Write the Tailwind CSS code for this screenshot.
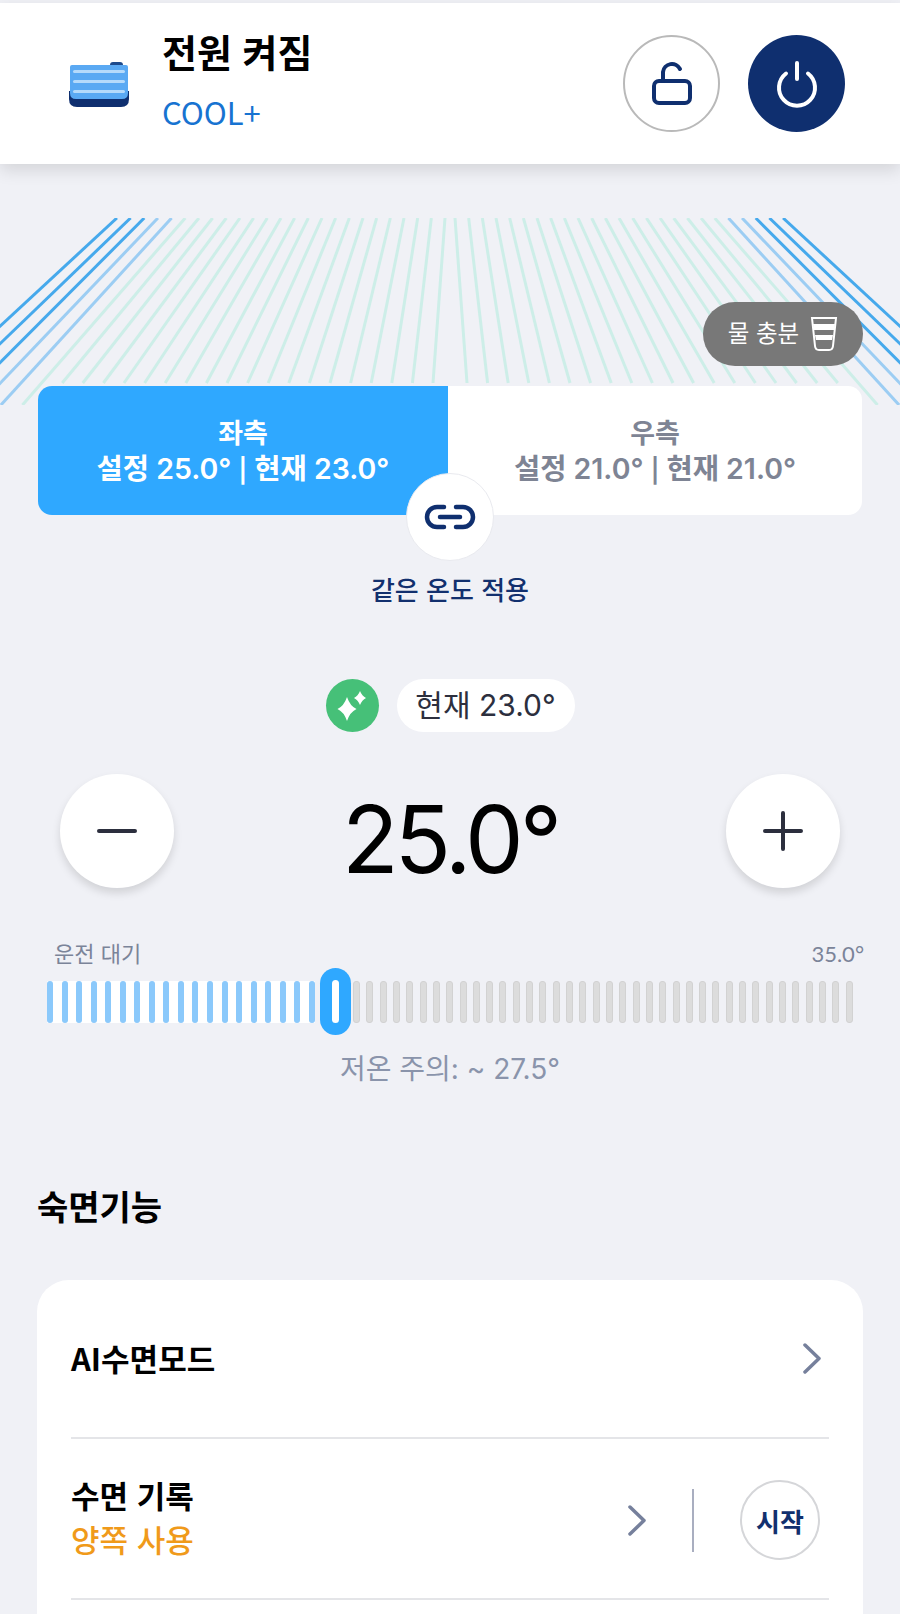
<!DOCTYPE html>
<html lang="ko">
<head>
  <meta charset="UTF-8">
  <meta name="viewport" content="width=device-width, initial-scale=1.0">
  <script src="https://cdn.jsdelivr.net/npm/@tailwindcss/browser@4"></script>
  <title>전원 켜짐</title>
</head>

<body class="bg-[#f0f1f6] font-['Inter','Noto_Sans_CJK_KR',sans-serif]">
  <div class="relative w-[900px] h-[1614px] overflow-hidden pt-[3px]">

    <!-- header -->
    <header class="relative z-10 h-[161px] bg-white flex items-center pl-[69px] pr-[55px] shadow-[0_6px_16px_rgba(0,0,0,0.12)]">
      <svg class="w-[60px] h-[46px] mt-[1px]" viewBox="0 0 60 46">
        <path d="M41 4 q0-3 3-3 h7 q3 0 3 3z" fill="#1d4a8c"/>
        <path d="M0 30 h60 v8 q0 8-8 8 H8 q-8 0-8-8z" fill="#0f2f6f"/>
        <path d="M1 6 q0-2 2-2 h54 q2 0 2 2 v26 q0 6-6 6 H7 q-6 0-6-6z" fill="#5aa9f3"/>
        <rect x="4" y="9" width="52" height="3" rx="1.5" fill="#b5dafb"/>
        <rect x="4" y="19" width="52" height="3" rx="1.5" fill="#b5dafb"/>
        <rect x="4" y="29" width="52" height="3" rx="1.5" fill="#b5dafb"/>
      </svg>
      <div class="ml-[33px] flex-1">
        <div class="text-[38px] leading-[44px] font-bold text-black font-['Noto_Sans_CJK_KR',sans-serif] mb-[21px] -mt-[8px]">전원 켜짐</div>
        <div class="text-[31px] leading-[36px] text-[#1773d1] font-['Noto_Sans_CJK_KR',sans-serif]">COOL+</div>
      </div>
      <div class="flex gap-[28px]">
        <div class="w-[97px] h-[97px] rounded-full border-2 border-[#b9b9b9] flex items-center justify-center">
          <svg class="w-[44px] h-[46px]" viewBox="0 0 44 46" fill="none" stroke="#0f2f6f" stroke-width="4" stroke-linecap="round">
            <rect x="4" y="20" width="36" height="22" rx="5"/>
            <path d="M13 20 v-9 a9 9 0 0 1 17-3"/>
          </svg>
        </div>
        <div class="w-[97px] h-[97px] rounded-full bg-[#0f2f6f] flex items-center justify-center">
          <svg class="w-[44px] h-[48px]" viewBox="0 0 44 48" fill="none" stroke="#fff" stroke-width="4" stroke-linecap="round">
            <path d="M22 3 v16"/>
            <path d="M11 13.5 a18 18 0 1 0 22 0"/>
          </svg>
        </div>
      </div>
    </header>

    <!-- rays behind the selector, generated below -->
    <svg id="rays" class="absolute left-0 top-[218px] w-[900px] h-[187px]" viewBox="0 218 900 187" fill="none" stroke-width="3"></svg>

    <div class="relative">
      <!-- water badge -->
      <div class="absolute right-[37px] top-[138px] w-[160px] h-[64px] rounded-full bg-[#787878] flex items-center justify-center gap-[11px] text-white text-[23.5px] z-10">
        <span>물 충분</span>
        <svg class="w-[28px] h-[34px]" viewBox="0 0 28 34" fill="none" stroke="#fff" stroke-width="2">
          <path d="M2 1 L5 29 q0.4 4 4 4 h10 q3.6 0 4-4 L26 1z"/>
          <path d="M3 7 h22 l-1 6 H4z M5 18 h18 l-1 5 H6z" fill="#fff" stroke="none"/>
        </svg>
      </div>

      <!-- left / right selector -->
      <div class="pt-[222px] px-[38px]">
        <div class="flex h-[129px] rounded-[14px] overflow-hidden">
          <div class="w-[410px] bg-[#2fa8ff] text-white flex flex-col items-center pt-[30px] font-semibold text-[28.5px] leading-[35px]">
            <span class="text-[27px]">좌측</span>
            <span>설정 25.0° <span class="text-[24px]">|</span> 현재 23.0°</span>
          </div>
          <div class="flex-1 bg-white text-[#7e8494] flex flex-col items-center pt-[30px] font-semibold text-[28.5px] leading-[35px]">
            <span class="text-[27px]">우측</span>
            <span>설정 21.0° <span class="text-[24px]">|</span> 현재 21.0°</span>
          </div>
        </div>
      </div>

      <div class="flex flex-col items-center -mt-[42px] relative">
        <div class="w-[88px] h-[88px] rounded-full bg-white border border-[#e9eaef] flex items-center justify-center">
          <svg class="w-[52px] h-[26px]" viewBox="0 0 52 26" fill="none" stroke="#0f2f6f" stroke-width="4.5" stroke-linecap="round">
            <path d="M20 3 H13 a10 10 0 0 0 0 20 H20"/>
            <path d="M32 3 H39 a10 10 0 0 1 0 20 H32"/>
            <path d="M16 13 H36"/>
          </svg>
        </div>
        <div class="mt-[10px] text-[26px] leading-[36px] font-medium text-[#12306e] font-['Noto_Sans_CJK_KR',sans-serif]">같은 온도 적용</div>
      </div>

      <!-- current temp -->
      <div class="mt-[72px] flex justify-center items-center gap-[18px]">
        <div class="w-[53px] h-[53px] rounded-full bg-[#46c078] flex items-center justify-center">
          <svg class="w-[34px] h-[36px]" viewBox="0 0 34 36" fill="#fff">
            <path d="M12 9 Q15 18 21.5 21 Q15 24 12 33 Q9 24 2.5 21 Q9 18 12 9z"/>
            <path d="M25 3 Q27 8 31 10 Q27 12 25 17 Q23 12 19 10 Q23 8 25 3z"/>
          </svg>
        </div>
        <div class="w-[178px] h-[53px] rounded-full bg-white flex items-center justify-center text-[30px] text-[#2c2f3e]">현재 23.0°</div>
      </div>

      <!-- set temp -->
      <div class="mt-[42px] px-[60px] flex items-center justify-between">
        <div class="w-[114px] h-[114px] rounded-full bg-white shadow-[0_5px_9px_rgba(0,0,0,0.13)] flex items-center justify-center">
          <svg class="w-[40px] h-[40px]" viewBox="0 0 40 40" stroke="#2c2f3e" stroke-width="4" stroke-linecap="round"><path d="M2 20 H38"/></svg>
        </div>
        <div class="mt-[8px] -mb-[8px] text-[93px] leading-[114px] tracking-[-4px] text-black">25.0°</div>
        <div class="w-[114px] h-[114px] rounded-full bg-white shadow-[0_5px_9px_rgba(0,0,0,0.13)] flex items-center justify-center">
          <svg class="w-[40px] h-[40px]" viewBox="0 0 40 40" stroke="#2c2f3e" stroke-width="4" stroke-linecap="round"><path d="M2 20 H38 M20 2 V38"/></svg>
        </div>
      </div>

      <!-- slider -->
      <div class="mt-[51px] pl-[54px] pr-[36px] flex justify-between text-[22px] leading-[30px] text-[#7b8499]">
        <span>운전 대기</span>
        <span class="font-['Lato',sans-serif]">35.0°</span>
      </div>
      <div class="-mt-[1px] pl-[47px] flex items-center h-[67px]">
        <div id="ticksOn" class="w-[268px] h-[42px] bg-white flex justify-between"></div>
        <div class="ml-[5px] w-[31px] h-[67px] rounded-full bg-[#2fa8ff] flex items-center justify-center">
          <div class="w-[7px] h-[43px] rounded-full bg-white"></div>
        </div>
        <div id="ticksOff" class="ml-[2px] w-[500px] h-[42px] flex justify-between"></div>
      </div>
      <div class="mt-[16px] text-center text-[28px] leading-[36px] text-[#8a94ab]">저온 주의: ~ 27.5°</div>

      <!-- sleep -->
      <h2 class="mt-[99px] ml-[37px] text-[34px] leading-[40px] font-bold text-black font-['Noto_Sans_CJK_KR',sans-serif]">숙면기능</h2>
      <div class="mt-[54px] mx-[37px] bg-white rounded-[32px] px-[34px] font-['Noto_Sans_CJK_KR',sans-serif] h-[400px]">
        <div class="h-[159px] flex items-center justify-between border-b-2 border-[#e4e5e8]">
          <span class="text-[31px] font-bold text-black">AI수면모드</span>
          <svg class="w-[18px] h-[31px] mr-[8px]" viewBox="0 0 18 31" fill="none" stroke="#76809c" stroke-width="3.5" stroke-linecap="round" stroke-linejoin="round"><path d="M2 2 L16 15.5 L2 29"/></svg>
        </div>
        <div class="h-[161px] pt-[3px] flex items-center border-b-2 border-[#e4e5e8]">
          <div class="flex-1 -mt-[7px] leading-[44px] text-[31px]">
            <div class="font-bold text-black">수면 기록</div>
            <div class="text-[#f09a1a] font-medium">양쪽 사용</div>
          </div>
          <svg class="w-[18px] h-[31px]" viewBox="0 0 18 31" fill="none" stroke="#76809c" stroke-width="3.5" stroke-linecap="round" stroke-linejoin="round"><path d="M2 2 L16 15.5 L2 29"/></svg>
          <div class="ml-[46px] w-[2px] h-[63px] bg-[#a9aec0]"></div>
          <div class="ml-[46px] mr-[9px] w-[80px] h-[80px] rounded-full border-2 border-[#d5d6d9] flex items-center justify-center text-[26px] font-bold text-[#12306e]">시작</div>
        </div>
      </div>
    </div>
  </div>

  <script>
    // ticks
    document.getElementById('ticksOn').innerHTML = '<div class="w-[6px] h-full rounded-full bg-[#8bc9fb]"></div>'.repeat(19);
    document.getElementById('ticksOff').innerHTML = '<div class="w-[7px] h-full rounded-[3px] bg-[#dcdcdc] border border-[#d2d2d2]"></div>'.repeat(38);

    // fan of rays, mirrored around the middle
    var rays = '';
    for (var i = 0; i < 25; i++) {
      var color = i >= 22 ? '#46a9ec' : i >= 20 ? '#9ccdf3' : '#cdeee8';
      var startX = 445 - 13.67 * i;
      var bottomX = 433 - 20.6 * i;
      var endY = i >= 19 ? 405 : 383;
      var endX = startX + (bottomX - startX) * (endY - 218) / 165;
      rays += '<path stroke="' + color + '" d="M' + startX + ' 218 L' + endX + ' ' + endY + '"/>';
      rays += '<path stroke="' + color + '" d="M' + (900 - startX) + ' 218 L' + (900 - endX) + ' ' + endY + '"/>';
    }
    document.getElementById('rays').innerHTML = rays;
  </script>
</body>
</html>
